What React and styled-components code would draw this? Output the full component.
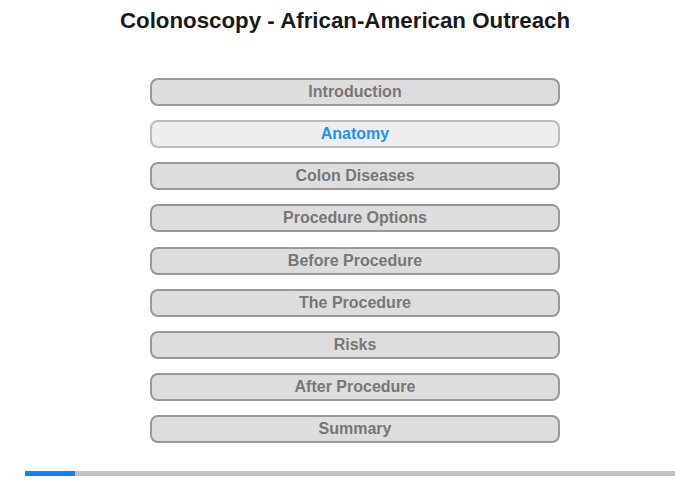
import React from "react"
import styled, { createGlobalStyle } from "styled-components"

const sections = [
  "Introduction",
  "Anatomy",
  "Colon Diseases",
  "Procedure Options",
  "Before Procedure",
  "The Procedure",
  "Risks",
  "After Procedure",
  "Summary",
]

const GlobalStyle = createGlobalStyle`
  body {
    margin: 0;
    background: #fff;
    font-family: "Liberation Sans", Arial, sans-serif;
  }
`

export default () => (
  <Page>
    <GlobalStyle />
    <Title>Colonoscopy - African-American Outreach</Title>
    <Menu>
      {sections.map(s => (
        <MenuButton key={s} active={s === "Anatomy"}>
          {s}
        </MenuButton>
      ))}
    </Menu>
    <Progress>
      <ProgressFill style={{ width: `${(1 / 13) * 100}%` }} />
    </Progress>
  </Page>
)

const Page = styled.div`
  width: 700px;
  height: 480px;
  display: flex;
  flex-direction: column;
  align-items: center;
`

const Title = styled.h1`
  margin: 8px 10px 0 0;
  font-size: 22.3px;
  font-weight: bold;
  color: #1a1a1a;
  line-height: 26px;
`

const Menu = styled.div`
  margin: 44px 0 0 10px;
  width: 410px;
  display: flex;
  flex-direction: column;
  gap: 14.15px;
`

const MenuButton = styled.div`
  box-sizing: border-box;
  height: 28px;
  border: 2px solid ${p => (p.active ? "#bbb" : "#999")};
  border-radius: 8px;
  background: ${p => (p.active ? "#eee" : "#ddd")};
  color: ${p => (p.active ? "#1e90ff" : "#777")};
  font-size: 16px;
  font-weight: bold;
  text-align: center;
  line-height: 24px;
  cursor: pointer;
`

const Progress = styled.div`
  margin-top: 28px;
  width: 650px;
  height: 5px;
  background: #c4c4c4;
`

const ProgressFill = styled.div`
  height: 100%;
  background: #0a84ff;
`
